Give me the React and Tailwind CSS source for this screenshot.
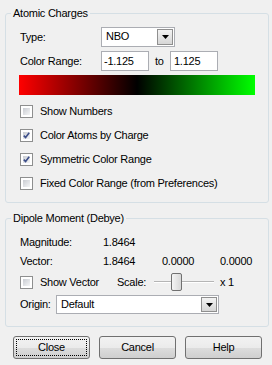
import React from 'react';

const font = { fontFamily: '"Liberation Sans", Arial, sans-serif' };

function Check({ checked }) {
    return (
        <span className="w-[13px] h-[13px] shrink-0 border border-[#8e8f8f] bg-white p-[2px] box-border">
            <span className="relative block w-full h-full bg-gradient-to-br from-[#c9ccd2] to-[#f5f6f7]">
                {checked && (
                    <svg viewBox="0 0 7 7" className="absolute inset-0 w-full h-full">
                        <path d="M0.8 3.6 L2.6 5.6 L6.2 0.8" fill="none" stroke="#3d4f8a" strokeWidth="1.6" />
                    </svg>
                )}
            </span>
        </span>
    );
}

function ArrowBtn() {
    return (
        <span className="flex items-center justify-center w-[16px] h-full border border-[#8f8f8f] bg-gradient-to-b from-[#f3f3f3] to-[#d6d6d6]">
            <svg width="7" height="4" viewBox="0 0 7 4">
                <path d="M0 0 H7 L3.5 4 Z" fill="#000" />
            </svg>
        </span>
    );
}

function Combo({ value, className }) {
    return (
        <div className={`flex items-stretch bg-white border border-[#abadb3] p-[1px] ${className}`}>
            <span className="flex-1 pl-[3px] leading-[15px]">{value}</span>
            <ArrowBtn />
        </div>
    );
}

function Group({ title, className, children }) {
    return (
        <div className={`relative border border-[#d5dfe5] rounded-[3px] ${className}`}>
            <span className="absolute -top-[8px] left-[5px] bg-[#f0f0f0] px-[2px] leading-[14px]">{title}</span>
            {children}
        </div>
    );
}

function CheckRow({ label, checked }) {
    return (
        <div className="flex items-center h-[24px]">
            <Check checked={checked} />
            <span className="ml-[7px]">{label}</span>
        </div>
    );
}

function Button({ children, focused }) {
    return (
        <button className="w-[77px] h-[23px] rounded-[3px] border border-[#707070] bg-[linear-gradient(#f2f2f2_0%,#ebebeb_50%,#dddddd_51%,#cfcfcf_100%)] p-[2px] text-[11px] tracking-[-0.25px]">
            <span className={`flex items-center justify-center w-full h-full ${focused ? 'border border-dotted border-black' : ''}`}>
                {children}
            </span>
        </button>
    );
}

export default function App() {
    return (
        <div style={font} className="w-[272px] h-[365px] bg-[#f0f0f0] text-[11px] tracking-[-0.25px] text-black pt-[13px] pl-[5px] pr-[3px] overflow-hidden">
            <Group title="Atomic Charges" className="pt-[13px] pl-[14px] pb-[7px]">
                <div className="flex items-center h-[20px]">
                    <span className="w-[81px]">Type:</span>
                    <Combo value="NBO" className="w-[74px] h-[20px]" />
                </div>
                <div className="flex items-center h-[20px] mt-[4px]">
                    <span className="w-[81px]">Color Range:</span>
                    <div className="w-[48px] h-[20px] bg-white border border-[#abadb3] pl-[2px] leading-[18px]">-1.125</div>
                    <span className="ml-[6px] w-[15px]">to</span>
                    <div className="w-[48px] h-[20px] bg-white border border-[#abadb3] pl-[3px] leading-[18px]">1.125</div>
                </div>
                <div className="w-[236px] h-[20px] mt-[4px] -ml-[1px] bg-[linear-gradient(to_right,#ff0000,#000000,#00ff00)]" />
                <div className="mt-[4px]">
                    <CheckRow label="Show Numbers" />
                    <CheckRow label="Color Atoms by Charge" checked />
                    <CheckRow label="Symmetric Color Range" checked />
                    <CheckRow label="Fixed Color Range (from Preferences)" />
                </div>
            </Group>

            <Group title="Dipole Moment (Debye)" className="mt-[15px] pt-[14px] pl-[14px] pb-[12px]">
                <div className="flex items-center h-[18px]">
                    <span className="w-[83px]">Magnitude:</span>
                    <span>1.8464</span>
                </div>
                <div className="flex items-center h-[18px] mt-[1px]">
                    <span className="w-[83px]">Vector:</span>
                    <span className="w-[59px]">1.8464</span>
                    <span className="w-[58px]">0.0000</span>
                    <span>0.0000</span>
                </div>
                <div className="flex items-center h-[22px] mt-[1px]">
                    <Check />
                    <span className="ml-[7px] w-[77px]">Show Vector</span>
                    <span className="w-[37px]">Scale:</span>
                    <div className="relative w-[60px] h-[18px] flex items-center">
                        <span className="block w-full h-[2px] border-t border-[#b5b5b5] border-b border-b-white" />
                        <span className="absolute left-[17px] top-0 w-[11px] h-[18px] rounded-[2px] border border-[#707070] bg-gradient-to-r from-[#f4f4f4] to-[#d8d8d8]" />
                    </div>
                    <span className="ml-[6px]">x 1</span>
                </div>
                <div className="flex items-center h-[19px] mt-[2px]">
                    <span className="w-[36px]">Origin:</span>
                    <Combo value="Default" className="w-[163px] h-[19px]" />
                </div>
            </Group>

            <div className="flex gap-[9px] mt-[9px] pl-[8px]">
                <Button focused>Close</Button>
                <Button>Cancel</Button>
                <Button>Help</Button>
            </div>
        </div>
    );
}
